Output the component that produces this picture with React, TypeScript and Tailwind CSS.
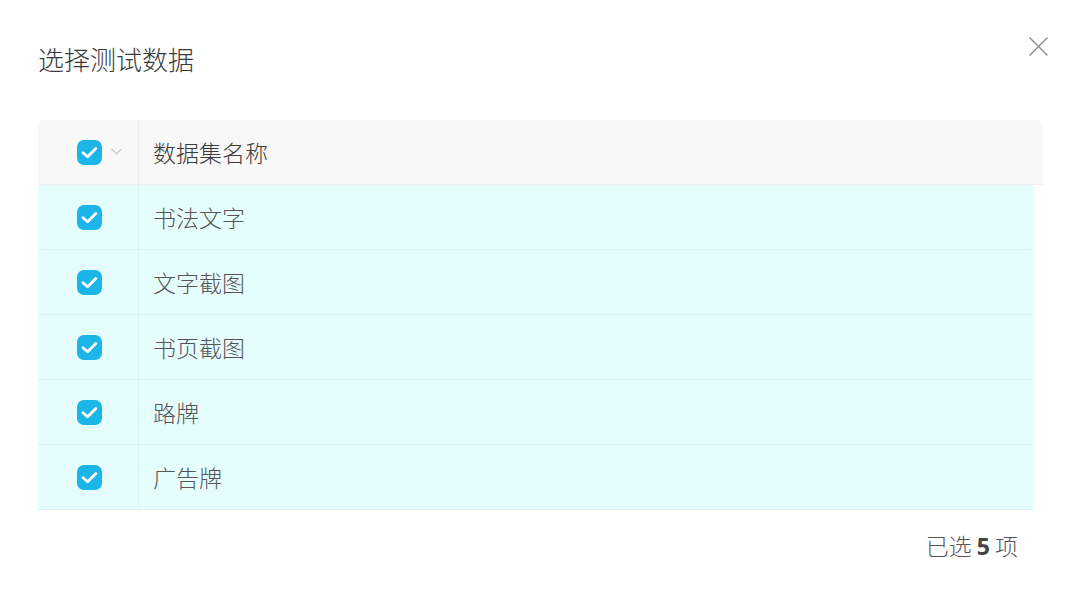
import React from "react";

const rows = ["书法文字", "文字截图", "书页截图", "路牌", "广告牌"];

function Check() {
  return (
    <div className="w-[25px] h-[25px] rounded-[7px] bg-[#1cb5e8] shrink-0">
      <svg width="25" height="25" viewBox="0 0 25 25" fill="none">
        <path d="M6 12.8 L10.6 16.8 L18.8 8.4" stroke="white" strokeWidth="2.8" strokeLinecap="round" strokeLinejoin="round" />
      </svg>
    </div>
  );
}

export default function App() {
  return (
    <div
      className="w-[1080px] h-[606px] bg-white relative overflow-hidden font-light"
      style={{ fontFamily: '"Noto Sans CJK SC", "Open Sans", sans-serif' }}
    >
      <div className="pt-[40px] px-[38px] flex items-start justify-between">
        <div className="text-[26px] leading-[38px] text-[#3a3a3a]">选择测试数据</div>
        <svg className="mt-[-4px] mr-[-7px]" width="21" height="21" viewBox="0 0 21 21" fill="none">
          <path d="M1.5 1.5 L19.5 19.5 M19.5 1.5 L1.5 19.5" stroke="#909090" strokeWidth="1.5" />
        </svg>
      </div>
      <div className="mt-[42px] ml-[38px] w-[1005px]">
        <div className="h-[65px] bg-[#f8f8f8] rounded-t-[6px] flex border-b border-[#f0f0f0]">
          <div className="w-[101px] flex items-center justify-center border-r border-[#efefef] pl-[3px] relative">
            <Check />
            <svg className="absolute left-[72px] top-[26px]" width="13" height="11" viewBox="0 0 13 11" fill="none">
              <path d="M1.5 3 L6.5 8 L11.5 3" stroke="#c8c8c8" strokeWidth="1.2" />
            </svg>
          </div>
          <div className="flex items-center pl-[14px] text-[23px] text-[#3a3a3a]">数据集名称</div>
        </div>
        <div className="w-[995px]">
          {rows.map((r) => (
            <div key={r} className="h-[65px] bg-[#e6fdfe] flex border-b border-[#d6f4f6]">
              <div className="w-[101px] flex items-center justify-center border-r border-[#d6f4f6] pl-[3px]">
                <Check />
              </div>
              <div className="flex items-center pl-[14px] text-[23px] text-[#555]">{r}</div>
            </div>
          ))}
        </div>
      </div>
      <div className="flex justify-end pr-[62px] mt-[18px] text-[23px] text-[#555]">
        <span>
          已选 <span className="font-bold text-[#444]" style={{ fontFamily: '"Open Sans", sans-serif' }}>5</span> 项
        </span>
      </div>
    </div>
  );
}
